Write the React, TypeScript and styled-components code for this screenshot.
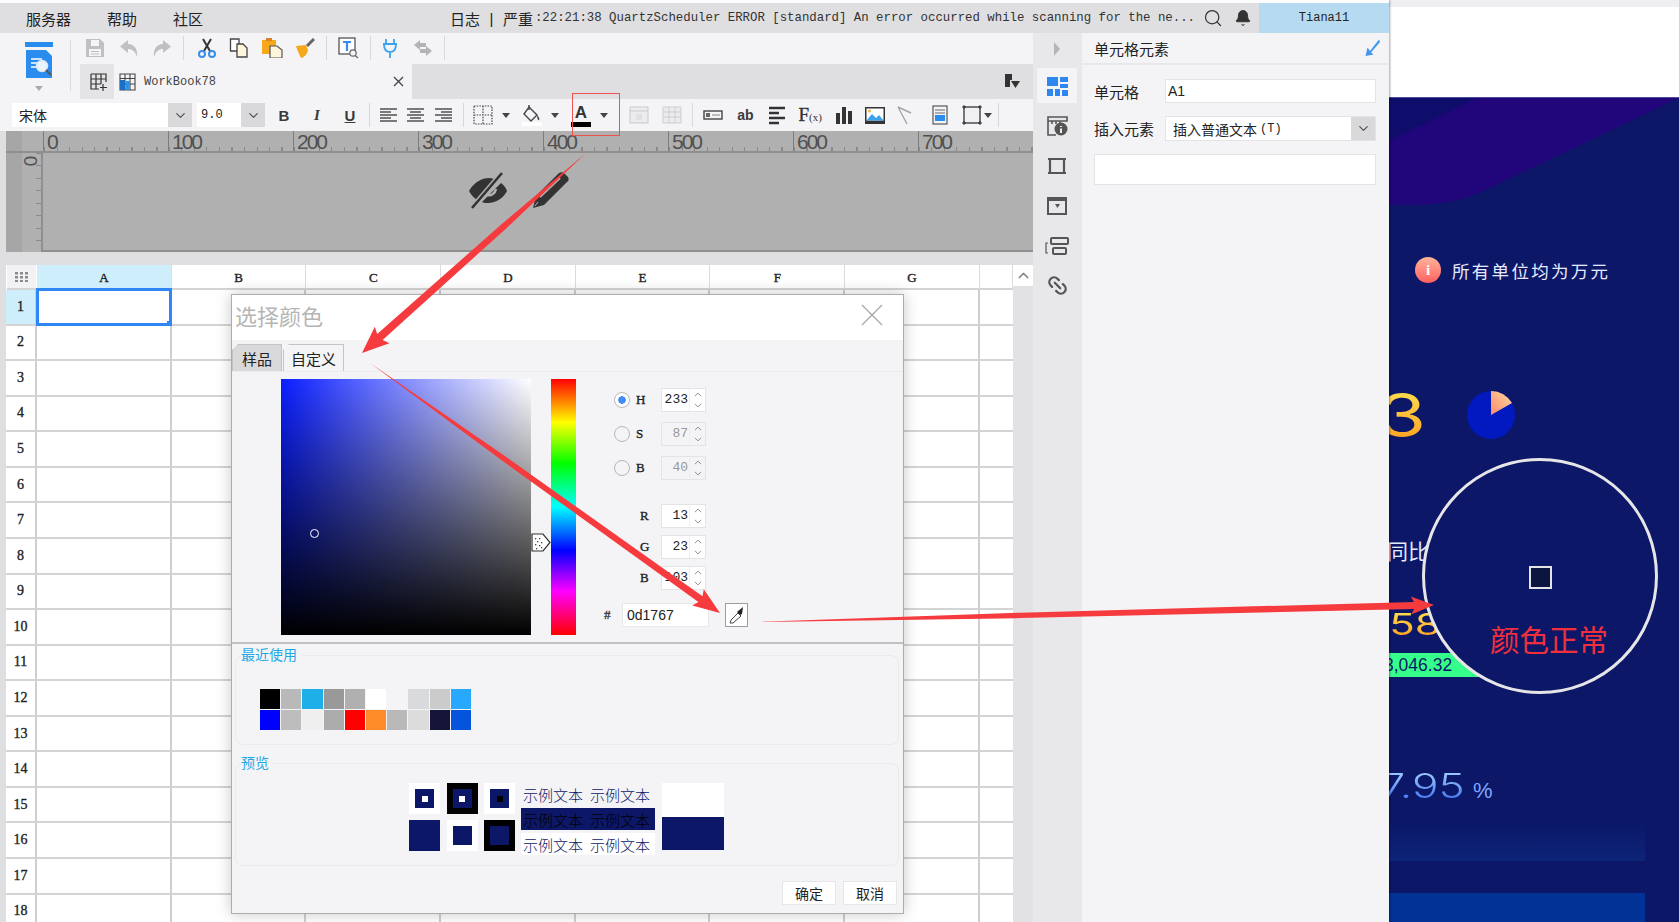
import React from "react";
import styled, { createGlobalStyle } from "styled-components";
import { Search, Bell, ChevronDown, ChevronUp, Link2 } from "lucide-react";

const CJK = `"Liberation Sans", "Noto Sans CJK SC", sans-serif`;
const MONO = `"Liberation Mono", "Noto Sans CJK SC", monospace`;
const SERIF = `"Liberation Serif", "Noto Sans CJK SC", serif`;

const Global = createGlobalStyle`
  html, body { margin: 0; padding: 0; background: #fff; }
  * { box-sizing: border-box; }
  body { font-family: ${CJK}; }
`;

const Page = styled.div`
  position: relative; display: flex; width: 1679px; height: 922px; overflow: hidden; background: #fff;
`;
const AppWindow = styled.div`
  display: flex; flex-direction: column; width: 1389px; height: 922px; padding-top: 3px;
  background: #fdfdfd; box-shadow: 1px 0 2px rgba(0,0,0,.35); z-index: 1; flex: none;
`;
const TopBar = styled.div`
  display: flex; align-items: center; height: 30px; background: #dfdfe1; color: #222; flex: none;
`;
const Menu = styled.div`
  display: flex; gap: 36px; width: 450px; padding-left: 26px; font-size: 15px;
`;
const LogLine = styled.div`
  display: flex; align-items: center; width: 746px; font-size: 15px; white-space: nowrap;
`;
const LogBar = styled.span`margin: 0 9.5px;`;
const LogMono = styled.span`
  font-family: ${MONO}; font-size: 12.36px; color: #333; margin-left: 2px;
`;
const TopIcon = styled.div`
  display: flex; width: 30px; justify-content: center; margin-left: ${p => p.$ml ?? 0}px; color: #333;
`;
const UserCell = styled.div`
  margin-left: auto; width: 130px; height: 100%; display: flex; align-items: center; justify-content: center;
  background: #b6dbf0; font-family: ${MONO}; font-size: 12px; color: #222;
`;
const AppBody = styled.div`display: flex; flex: 1; min-height: 0;`;
const Workspace = styled.div`
  display: flex; flex-direction: column; width: 1033px; background: #dfdfe1; flex: none;
`;
const HeadBlock = styled.div`
  display: grid; grid-template-columns: 80px 1fr; grid-template-rows: 31px 35px; background: #f4f4f7;
`;
const LogoCell = styled.div`
  grid-row: 1 / 3; display: flex; flex-direction: column; align-items: center; padding: 9px 0 0 0; width: 65px;
  margin-left: 6px; position: relative; gap: 7px;
`;
const LogoRule = styled.div`
  position: absolute; right: 0; top: 7px; bottom: 8px; width: 1px; background: #dcdcde;
`;
const Caret = styled.i`
  display: block; width: 0; height: 0; border-left: 4px solid transparent; border-right: 4px solid transparent;
  border-top: 5px solid ${p => p.$c ?? "#444"}; flex: none;
`;
const ToolRow = styled.div`display: flex; align-items: center; padding: 0 0 2px 5px;`;
const ToolGroup = styled.div`display: flex; align-items: center; gap: ${p => p.$gap ?? 13.5}px;`;
const Sep = styled.div`
  width: 1px; height: ${p => p.$h ?? 24}px; background: #d8d8da; flex: none;
  margin-left: ${p => p.$l ?? 11}px; margin-right: ${p => p.$r ?? 11}px;
`;
const TabRow = styled.div`display: flex; background: #dfdfe1; align-items: stretch; position: relative;`;
const AddTab = styled.div`
  width: 34px; display: flex; align-items: center; justify-content: center; background: #e4e4e6; padding-left: 3px;
`;
const ActiveTab = styled.div`
  width: 298px; display: flex; align-items: center; gap: 8px; padding: 0 8px 0 5px; background: #f4f4f7;
  font-family: ${MONO}; font-size: 12px; color: #444;
`;
const TabClose = styled.span`margin-left: auto; display: flex;`;
const TabEnd = styled.div`margin-left: auto; display: flex; align-items: center; padding-right: 13px;`;
const FormatRow = styled.div`
  display: flex; align-items: center; height: 32px; background: #f4f4f7; padding-left: 12px; flex: none;
`;
const FontBox = styled.div`
  display: flex; align-items: stretch; height: 24px; width: ${p => p.$w}px; margin-left: ${p => p.$ml ?? 0}px;
  background: #fff; font-size: 14px; color: #222; flex: none;
`;
const FontValue = styled.div`
  flex: 1; display: flex; align-items: center; padding-left: ${p => p.$pad ?? 7}px;
  font-family: ${p => (p.$mono ? MONO : CJK)}; font-size: ${p => (p.$mono ? 12 : 14)}px;
`;
const DropButton = styled.div`
  width: ${p => p.$w ?? 24}px; background: #d9d9dc; display: flex; align-items: center; justify-content: center; color: #555;
`;
const FmtGroup = styled.div`
  display: flex; align-items: center; gap: ${p => p.$gap ?? 8}px; margin-left: ${p => p.$ml ?? 0}px;
`;
const FmtCell = styled.div`
  width: 24px; height: 24px; display: flex; align-items: center; justify-content: center; flex: none;
`;
const FmtLetter = styled.span`
  font-size: ${p => p.$s ?? 15}px; font-weight: 700; color: #3a3a3a;
  font-style: ${p => (p.$i ? "italic" : "normal")}; text-decoration: ${p => (p.$u ? "underline" : "none")};
  font-family: ${p => (p.$i ? '"Liberation Serif", serif' : '"Liberation Sans", sans-serif')};
`;
const FxText = styled.span`
  font-family: "Liberation Serif", serif; font-weight: 400; font-size: 19px; color: #333; -webkit-text-stroke: .4px #333;
  small { font-size: 11px; -webkit-text-stroke: 0; }
`;
const WithCaret = styled.div`display: flex; align-items: center; gap: ${p => p.$gap ?? 7}px;`;
const ColorA = styled.div`
  width: 24px; display: flex; flex-direction: column; align-items: center; line-height: 1;
  font: 700 17px "Liberation Sans", sans-serif; color: #333;
  &::after { content: ""; width: 20px; height: 5px; background: #000; margin-top: -1px; }
`;

const RulerArea = styled.div`
  display: flex; flex-direction: column; height: 121px; margin-left: 6px; background: #b0b0b0; flex: none;
`;
const RulerRow = styled.div`display: flex; height: 22px; border-bottom: 2px solid #8f8f8f; flex: none;`;
const RulerCorner = styled.div`width: 37px; flex: none; background: linear-gradient(90deg,#a6a6a6 0 16px,#b0b0b0 16px);`;
const RulerMark = styled.div`
  width: 125px; flex: none; padding-left: 3px; border-left: 1px solid #7d7d7d; font-size: 21px; line-height: 21px;
  letter-spacing: -2px; color: #505050; font-family: "Liberation Sans", sans-serif;
  background: repeating-linear-gradient(90deg, #8a8a8a 0 1px, transparent 1px 12.5px) bottom / 100% 4px no-repeat;
`;
const CanvasRow = styled.div`display: flex; flex: 1; min-height: 0;`;
const VRuler = styled.div`
  width: 37px; flex: none; border-right: 2px solid #8f8f8f; padding-left: 17px;
  background:
    repeating-linear-gradient(180deg, #8a8a8a 0 1px, transparent 1px 12.5px) right / 5px 100% no-repeat,
    linear-gradient(90deg,#a6a6a6 0 16px,#b0b0b0 16px);
`;
const VZero = styled.div`
  width: 14px; height: 14px; transform: rotate(90deg); font-size: 19px; color: #505050; text-align: center; line-height: 14px;
  margin-top: 1px; font-family: "Liberation Sans", sans-serif;
`;
const CanvasMain = styled.div`
  flex: 1; display: flex; gap: 23px; padding: 18px 0 0 424px; border-bottom: 2px solid #8f8f8f;
`;
const GapBand = styled.div`height: 13px; flex: none;`;

const SheetWrap = styled.div`display: flex; flex: 1; min-height: 0; margin-left: 6px; overflow: hidden;`;
const SheetGrid = styled.div`
  display: grid; grid-template-columns: 31px repeat(7, 134.7px) 33px; grid-auto-rows: 35.57px;
  grid-template-rows: 25px; background: #fff; width: 1007px; align-content: start;
`;
const Corner = styled.div`
  display: flex; align-items: center; justify-content: center; background: #f2f2f4; margin: 0 1px 0 1px;
  border-bottom: 2px solid #d4d4d4;
`;
const ColHead = styled.div`
  display: flex; align-items: center; justify-content: center; font-family: ${SERIF}; font-size: 13px; -webkit-text-stroke: .35px #222;
  color: #222; padding-top: 2px; background: ${p => (p.$on ? "#cdeefa" : "#fff")}; border-right: 1px solid #dcdcdc; border-bottom: 2px solid #d4d4d4;
`;
const RowHead = styled.div`
  display: flex; align-items: center; justify-content: center; font-family: ${SERIF}; font-size: 14px; -webkit-text-stroke: .35px #222;
  color: #222; background: ${p => (p.$on ? "#cdeefa" : "#fff")}; border-right: 2px solid #cfcfcf; border-bottom: 2px solid #d4d4d4;
`;
const Cell = styled.div`
  position: relative; background: #fff; border-right: ${p => (p.$last ? "0" : "2px solid #cfcfcf")}; border-bottom: 2px solid #d4d4d4;
`;
const Selection = styled.div`
  position: absolute; left: -1px; top: -2px; right: -2px; bottom: -2px; border: 3px solid #2f86f4;
  &::after { content: ""; position: absolute; right: -5px; bottom: -5px; width: 7px; height: 7px; background: #2f86f4; }
`;
const ScrollTrack = styled.div`display: flex; flex-direction: column; width: 20px; flex: none; background: #e2e2e4;`;
const ScrollUp = styled.div`
  height: 21px; background: #fff; display: flex; align-items: center; justify-content: center; color: #888;
`;

const Rail = styled.div`
  width: 49px; flex: none; background: #e8e8ea; padding: 0 5px 0 4px; display: flex; flex-direction: column; gap: 5px;
`;
const RailToggle = styled.div`height: 31px; display: flex; align-items: center; justify-content: center; margin-bottom: -1px;`;
const RailItem = styled.div`
  height: 35px; display: flex; align-items: center; justify-content: center; background: ${p => (p.$on ? "#f4f4f7" : "transparent")};
`;
const SidePanel = styled.div`flex: 1; background: #f4f4f7; display: flex; flex-direction: column; color: #222;`;
const SideHead = styled.div`
  height: 32px; display: flex; align-items: center; justify-content: space-between; padding: 0 9px 0 12px;
  border-bottom: 2px solid #e8e8ea; font-size: 15px; flex: none;
`;
const SideForm = styled.div`display: flex; flex-direction: column; gap: 13px; padding: 14px 13px 0 12px;`;
const FormRow = styled.div`display: flex; align-items: center; font-size: 15px;`;
const FormLabel = styled.div`width: 71px; flex: none;`;
const TextField = styled.div`
  flex: 1; display: flex; align-items: center; height: ${p => p.$h ?? 24}px; background: #fff; border: 1px solid #e4e4e6; padding-left: 2px; font-size: 14px;
`;
const SelectField = styled.div`
  flex: 1; display: flex; height: 25px; background: #fff; border: 1px solid #e4e4e6;
`;
const SelectValue = styled.div`flex: 1; display: flex; align-items: center; padding-left: 7px; font-size: 14px;`;
const SelectTail = styled.small`font-family: ${MONO}; font-size: 12px; margin-left: 3px;`;

/* colour dialog */
const Dialog = styled.div`
  position: absolute; left: 231px; top: 294px; width: 673px; height: 620px; background: #f4f4f7; z-index: 3;
  border: 1.5px solid #acacac; box-shadow: 0 0 14px rgba(0,0,0,.22); display: flex; flex-direction: column;
`;
const DialogHead = styled.div`
  height: 45px; flex: none; display: flex; align-items: center; justify-content: space-between; background: #fff;
  padding: 0 20px 5px 3px; font-size: 22px; color: #b5b5b5;
`;
const TabStrip = styled.div`
  height: 32px; flex: none; display: flex; align-items: flex-end; gap: 1px; padding-left: 0; border-bottom: 1px solid #ececef;
`;
const PickerTab = styled.div`
  height: 27px; width: ${p => p.$w}px; display: flex; align-items: center; justify-content: center; font-size: 15px; color: #222;
  background: ${p => (p.$on ? "#f4f4f7" : "#d9d9dc")}; border: 1px solid #c4c4c6; border-bottom: 0;
  clip-path: polygon(6px 0, 100% 0, 100% 100%, 0 100%, 0 6px);
`;
const CustomPane = styled.div`
  height: 272px; flex: none; display: flex; padding-left: 49px; border-bottom: 2px solid #c0c0c2;
`;
const ColorField = styled.div`
  position: relative; width: 250px; height: 256px; margin-top: 7px; flex: none;
  background: linear-gradient(to top, #000, rgba(0,0,0,0)), linear-gradient(to right, #0a1eff, #fff);
`;
const FieldDot = styled.div`
  position: absolute; left: 29px; top: 150px; width: 9px; height: 9px; border-radius: 50%; border: 1px solid #fff;
`;
const ThumbGutter = styled.div`width: 20px; flex: none; padding-top: 161px;`;
const HueBar = styled.div`
  width: 25px; height: 256px; margin-top: 7px; flex: none;
  background: linear-gradient(to bottom,#f00 0%,#ff0 17%,#0f0 33%,#0ff 50%,#00f 67%,#f0f 83%,#f00 100%);
`;
const HsbColumn = styled.div`
  display: flex; flex-direction: column; padding-top: 16px; margin-left: 38px; width: 150px;
`;
const SpinRow = styled.div`
  display: flex; align-items: center; height: 24px; margin-top: ${p => p.$mt ?? 0}px;
`;
const Radio = styled.div`
  width: 16px; height: 16px; border-radius: 50%; border: 1px solid #b8b8ba; background: ${p => (p.$on ? "radial-gradient(circle,#3f8ef5 0 3.5px,#fff 4px)" : "#f4f4f7")}; flex: none;
`;
const SpinLabel = styled.div`
  width: ${p => p.$w}px; padding-left: ${p => p.$pad ?? 0}px; flex: none;
  font-family: ${SERIF}; font-size: 13px; -webkit-text-stroke: .35px #222; color: #222;
`;
const SpinBox = styled.div`
  width: 45px; height: 24px; display: flex; background: ${p => (p.$off ? "#f4f4f7" : "#fff")}; border: 1px solid #e4e4e6; flex: none;
`;
const SpinValue = styled.div`
  flex: 1; text-align: right; font-family: ${MONO}; font-size: 13px; line-height: 22px; padding-right: 1px;
  color: ${p => (p.$off ? "#999" : "#222")};
`;
const SpinArrows = styled.div`
  width: 16px; display: flex; flex-direction: column; align-items: center; justify-content: center; color: #666; border-left: 1px solid #eee; flex: none;
`;
const HexRow = styled.div`display: flex; align-items: center; height: 24px; margin-top: 13px; margin-left: -10px;`;
const HexMark = styled.div`
  width: 18px; font-family: ${SERIF}; font-size: 13px; -webkit-text-stroke: .35px #333; color: #333; flex: none;
`;
const HexInput = styled.div`
  width: 87px; height: 24px; background: #fff; border: 1px solid #e8e8ea; padding-left: 4px; font-size: 14px; line-height: 22px; color: #222; flex: none;
`;
const PickButton = styled.div`
  width: 23px; height: 24px; margin-left: 16px; background: #fff; border: 1px solid #9c9c9c; display: flex; align-items: center; justify-content: center; flex: none;
`;
const FieldGroup = styled.div`
  position: relative; height: ${p => p.$h}px; margin: ${p => p.$mt}px 4px 0 3px; flex: none;
  border: 1px solid #ebebee; border-radius: 8px; padding: ${p => p.$pt}px 0 0 ${p => p.$pl}px;
`;
const GroupLegend = styled.div`
  position: absolute; left: 5px; top: -10px; padding-right: 5px; background: #f4f4f7; font-size: 14px; line-height: 18px; color: #1ea8e6;
`;
const SwatchGrid = styled.div`
  display: grid; grid-template-columns: repeat(10, 20.2px); grid-auto-rows: 20px; gap: 1px;
`;
const Swatch = styled.div`background: ${p => p.$c};`;
const PreviewRow = styled.div`display: flex;`;
const BoxGrid = styled.div`
  display: grid; grid-template-columns: 31px 31px 31px; grid-auto-rows: 31px; column-gap: 6.5px; row-gap: 6px; flex: none;
`;
const Nest = styled.div`
  display: flex; align-items: center; justify-content: center; background: ${p => p.$c};
`;
const NestMid = styled(Nest)`width: 19px; height: 19px;`;
const NestCore = styled(Nest)`width: 6px; height: 6px;`;
const SampleStack = styled.div`
  width: 134px; margin-left: 6px; display: flex; flex-direction: column; gap: 3px; flex: none;
`;
const SampleLine = styled.div`
  height: 22px; display: flex; gap: 7px; padding-left: 2px; align-items: center; font-size: 15px; font-weight: 300;
  background: ${p => p.$bg}; color: ${p => p.$fg}; white-space: nowrap;
`;
const CompareCol = styled.div`width: 62px; height: 67px; margin-left: 7px; display: flex; flex-direction: column; flex: none;`;
const CompareHalf = styled.div`flex: 1; background: ${p => p.$c};`;
const DialogFoot = styled.div`display: flex; justify-content: flex-end; gap: 7px; padding: 15px 6px 0 0;`;
const FootButton = styled.div`
  width: 54px; height: 24px; background: #fff; border: 1px solid #e6e6e8; display: flex; align-items: center; justify-content: center; font-size: 14px; color: #222;
`;

/* dashboard behind */
const Dashboard = styled.div`position: relative; flex: 1; display: flex; flex-direction: column; background: #fff;`;
const GreyStrip = styled.div`height: 7px; background: #efeff1; flex: none;`;
const WhiteStrip = styled.div`height: 90px; background: #fff; flex: none;`;
const DarkPanel = styled.div`
  flex: 1; display: flex; flex-direction: column; background: #0c1767; color: #fff; border-top: 1px solid #4c4796; overflow: hidden;
`;
const WaveArt = styled.svg`display: block; flex: none;`;
const Notice = styled.div`
  display: flex; align-items: center; gap: 11px; height: 28px; margin-top: 48px; padding-left: 26px; flex: none;
  font-size: 17.5px; letter-spacing: 2.3px; color: #e6eaff;
`;
const InfoDot = styled.div`
  width: 26px; height: 26px; border-radius: 50%; background: linear-gradient(#ffb59a,#ff6060); display: flex; align-items: center; justify-content: center;
  font: 700 15px "Liberation Serif", serif; color: #fff; flex: none; letter-spacing: 0;
`;
const KpiRow = styled.div`display: flex; align-items: center; height: 50px; margin-top: 106px; flex: none;`;
const GoldClip = styled.div`
  width: ${p => p.$w}px; overflow: hidden; flex: none; text-align: right;
`;
const GoldText = styled.span`
  display: inline-block; font: 400 ${p => p.$s}px/1.05 Inter, sans-serif; transform: scaleX(${p => p.$x}); transform-origin: right center;
  background: linear-gradient(#ffe552,#ff9b1c); -webkit-background-clip: text; background-clip: text; color: transparent;
`;
const Pie = styled.svg`margin-left: 43px; flex: none;`;
const YoY = styled.div`
  width: 40px; overflow: hidden; direction: rtl; margin-top: 99px; font-size: 21px; line-height: 26px; color: #e6eaff; white-space: nowrap; flex: none;
`;
const GoldRow = styled.div`margin-top: 44px; flex: none;`;
const GreenPill = styled.div`
  width: 100px; height: 24px; margin-top: 12px; background: #35ff8a; color: #0c1767;
  font-size: 17.5px; line-height: 24px; white-space: nowrap; overflow: hidden; flex: none; text-indent: -5px;
`;
const PercentRow = styled.div`display: flex; align-items: baseline; margin-top: 92px; height: 34px; flex: none;`;
const PercentClip = styled.div`width: 76px; overflow: hidden; text-align: right; flex: none;`;
const PercentValue = styled.span`
  display: inline-block; font: 300 34px/34px Inter, sans-serif; transform: scaleX(1.3); transform-origin: right center;
  background: linear-gradient(#a5d4ff,#3d6ef0); -webkit-background-clip: text; background-clip: text; color: transparent;
`;
const PercentSign = styled.div`
  margin-left: 8px; font: 400 22px "Liberation Sans", sans-serif; color: #7fa6ff;
`;
const BandSoft = styled.div`
  width: 256px; height: 40px; margin-top: 18px; background: linear-gradient(rgba(12,36,120,0),#0c2478); flex: none;
`;
const BandSolid = styled.div`width: 256px; height: 30px; margin-top: 32px; background: #033296; flex: none;`;
const Lens = styled.div`
  position: absolute; left: 33px; top: 458px; width: 236px; height: 236px; border-radius: 50%; border: 3px solid #e6e6e8;
  background: #0c1767; display: flex; flex-direction: column; align-items: center; padding-top: 105px; z-index: 2;
`;
const LensProbe = styled.div`width: 23px; height: 23px; border: 2px solid #e4e4e6; background: #0c1440; flex: none;`;
const LensText = styled.div`margin: 34px 0 0 18px; font-size: 29.5px; line-height: 36px; color: #f0303c; white-space: nowrap;`;

/* call-out overlays */
const MarkBox = styled.div`
  position: absolute; left: 572px; top: 93px; width: 48px; height: 43px; border: 1.5px solid #ef5350; z-index: 2;
`;
const ArrowLayer = styled.svg`position: absolute; left: 0; top: 0; z-index: 4; pointer-events: none;`;

/* drawings */
type P = { s?: number };
const Svg = ({ w = 20, h = 20, children }: { w?: number; h?: number; children: React.ReactNode }) => (
  <svg width={w} height={h} viewBox={`0 0 ${w} ${h}`} style={{ flex: "none" }}>{children}</svg>
);
const IconLogo = () => (
  <Svg w={28} h={37}>
    <rect x="0" y="0" width="28" height="5" fill="#2b8cf0" />
    <path d="M1 8H21L27 14V36H1Z" fill="#2b8cf0" />
    <path d="M6 17H17M6 21H12M6 25H11" stroke="#fff" strokeWidth="1.5" />
    <circle cx="17" cy="24" r="5.5" fill="#eaf4ff" stroke="#dfe8ef" strokeWidth="1.5" />
    <path d="M21 28L26 33" stroke="#555" strokeWidth="1.8" />
  </Svg>
);
const IconSave = () => (
  <Svg><path d="M1 1H15L19 5V19H1Z" fill="#bfc0c2" /><rect x="6" y="2" width="8" height="6" fill="#f4f4f7" /><rect x="4" y="11" width="12" height="7" fill="#f4f4f7" /><path d="M6 13.5H14M6 16H14" stroke="#bfc0c2" /></Svg>
);
const IconUndo = () => <Svg><path d="M9 2L1 8.5L9 15V11C13 11 16 13 18 19C19 11 15 6 9 6Z" fill="#bfc0c2" /></Svg>;
const IconRedo = () => <Svg><path d="M11 2L19 8.5L11 15V11C7 11 4 13 2 19C1 11 5 6 11 6Z" fill="#bfc0c2" /></Svg>;
const IconCut = () => (
  <Svg><path d="M6 1L13 13M14 1L7 13" stroke="#333" strokeWidth="2" fill="none" /><circle cx="5" cy="16" r="3" stroke="#3a8ee8" strokeWidth="2" fill="none" /><circle cx="15" cy="16" r="3" stroke="#3a8ee8" strokeWidth="2" fill="none" /></Svg>
);
const IconCopy = () => (
  <Svg><path d="M1.5 1H10V13H1.5Z" fill="#fff" stroke="#444" strokeWidth="1.3" /><path d="M8 6H14L18 10V19H8Z" fill="#fff4dc" stroke="#444" strokeWidth="1.3" /></Svg>
);
const IconPaste = () => (
  <Svg w={22}><rect x="1" y="2" width="14" height="14" fill="#f5a81c" /><rect x="5" y="0" width="6" height="3" fill="#d9822b" /><path d="M9 8H16L21 12V20H9Z" fill="#fff4dc" stroke="#555" strokeWidth="1.2" /></Svg>
);
const IconBrush = () => (
  <Svg><path d="M1 8L11 7L13 12C12 16 10 19 6 20C4 16 2 12 1 8Z" fill="#f5a81c" /><path d="M12 8L19 1" stroke="#666" strokeWidth="3" /></Svg>
);
const IconFind = () => (
  <Svg w={21} h={22}><rect x="1" y="1" width="16" height="16" fill="#fff" stroke="#555" strokeWidth="1.3" /><path d="M5 5H13M9 5V14" stroke="#3a8ee8" strokeWidth="2.2" /><circle cx="15" cy="16" r="3.2" fill="#f4f4f7" stroke="#666" strokeWidth="1.2" /><path d="M17 18.5L20 21" stroke="#666" strokeWidth="1.3" /></Svg>
);
const IconPlug = () => (
  <Svg w={18}><path d="M5 1V6M13 1V6M2 6H16M3 6C3 12 6 14 9 14C12 14 15 12 15 6M9 14V20" stroke="#3da2ee" strokeWidth="1.8" fill="none" /></Svg>
);
const IconSwap = () => (
  <Svg><path d="M1 7L7 2V5H13V9H7V12Z" fill="#b3b4b6" /><path d="M19 13L13 8V11H7V15H13V18Z" fill="#b3b4b6" /></Svg>
);
const IconAddGrid = () => (
  <Svg w={18} h={18}><path d="M1 1H16V9M1 1V16H9M1 6H16M6 1V16M11 1V11M1 11H11" stroke="#333" strokeWidth="1.2" fill="none" /><path d="M13 11V18M10 14.5H17" stroke="#333" strokeWidth="1.2" /></Svg>
);
const IconBook = () => (
  <Svg w={17} h={18}><path d="M1 1H16V17H1ZM1 5.5H16M6 1V17M11 1V17M1 11H16" stroke="#444" strokeWidth="1.1" fill="none" /><path d="M1 7H6V17H1Z" fill="#1e6fc4" /><path d="M7 8H10.5V17H7Z" fill="#2c93e8" /></Svg>
);
const IconClose = ({ s = 11 }: P) => (
  <svg width={s} height={s} viewBox="0 0 11 11"><path d="M1 1L10 10M10 1L1 10" stroke="#444" strokeWidth="1.3" /></svg>
);
const IconPaneMenu = () => (
  <Svg w={15} h={15}><path d="M0 0H7V6H5V13H0Z" fill="#333" /><path d="M6 7H15L10.5 14Z" fill="#333" /></Svg>
);
const IconAlign = ({ a }: { a: "l" | "c" | "r" }) => {
  const long = [3, 9, 15], short = [6, 12];
  const x = a === "l" ? 1 : a === "c" ? 4 : 7;
  return (
    <Svg w={19} h={18}>
      {long.map(y => <path key={y} d={`M1 ${y}H18`} stroke="#444" strokeWidth="1.4" />)}
      {short.map(y => <path key={y} d={`M${x} ${y}H${x + 11}`} stroke="#444" strokeWidth="1.4" />)}
    </Svg>
  );
};
const IconBorder = () => (
  <Svg w={20} h={20}><path d="M1 1H19V19H1ZM10 1V19M1 10H19" stroke="#444" strokeWidth="1.2" strokeDasharray="1.5 1.2" fill="none" /></Svg>
);
const IconFill = () => (
  <Svg w={20} h={22}><path d="M7 3L15 11L9 17L2 10Z" fill="#f4f4f7" stroke="#444" strokeWidth="1.4" /><path d="M7 1V6" stroke="#444" strokeWidth="1.4" /><path d="M15 11C17 13 18 15 17 16C16 17 15 14 15 11Z" fill="#444" /><rect x="0" y="18" width="20" height="4" fill="#fff" /></Svg>
);
const IconFrameA = () => <Svg><rect x="1" y="2" width="18" height="16" fill="#ececee" stroke="#c9c9cb" /><path d="M1 6H19" stroke="#c9c9cb" /><rect x="7" y="9" width="6" height="6" fill="#e0e0e2" /></Svg>;
const IconTable = () => <Svg><path d="M1 2H19V18H1ZM1 7H19M1 12H19M7 2V18M13 2V18" stroke="#cdcdcf" fill="#ececee" /></Svg>;
const IconField = () => <Svg h={12}><rect x="1" y="2" width="18" height="8" fill="none" stroke="#444" strokeWidth="1.4" /><rect x="3" y="4" width="4" height="4" fill="#666" /><path d="M9 6H17" stroke="#bbb" strokeWidth="2" /></Svg>;
const IconLines = () => <Svg><path d="M1 3H17M1 8H11M1 13H17M1 18H11" stroke="#333" strokeWidth="2.6" /></Svg>;
const IconBars = () => <Svg><path d="M3 8H7V19H3ZM9 2H13V19H9ZM15 6H19V19H15Z" fill="#333" /></Svg>;
const IconPicture = () => <Svg w={20} h={18}><rect x="0" y="1" width="20" height="17" fill="#333" /><rect x="1.5" y="2.5" width="17" height="12" fill="#fff" /><path d="M1.5 14.5L7 8L11 12L14 9L18.5 14.5Z" fill="#3aa3ee" /><circle cx="4.5" cy="5" r="1.5" fill="#f2b33b" /></Svg>;
const IconSlash = () => <Svg><path d="M1 2L14 8M1 2L10 19" stroke="#a5a5a7" strokeWidth="1.4" fill="none" /></Svg>;
const IconPanel = () => <Svg w={16} h={20}><rect x="1" y="1" width="14" height="18" fill="#f4f4f7" stroke="#555" strokeWidth="1.2" /><path d="M3 5H13M3 8H13" stroke="#666" /><path d="M3 10H13V16H3Z" fill="#2b8cf0" /></Svg>;
const IconFrame = () => <Svg><rect x="2" y="2" width="16" height="16" fill="#f0f0f2" stroke="#333" strokeWidth="1.3" /><path d="M0 2H4M2 0V4M16 2H20M18 0V4M0 18H4M2 16V20M16 18H20M18 16V20" stroke="#333" /></Svg>;
const IconEye = () => (
  <Svg w={42} h={38}>
    <path d="M2 20C7 11 15 7 22 7C25 7 28 8 30 9L10 29C7 27 4 24 2 20Z" fill="#333" />
    <path d="M34 12C37 14 39 17 40 20C36 28 28 32 21 32C19 32 17 32 15 31Z" fill="#333" />
    <path d="M20 24C24 25 28 23 29 18" stroke="#b0b0b0" strokeWidth="2.5" fill="none" />
    <path d="M5 37L35 2" stroke="#b0b0b0" strokeWidth="5.5" />
    <path d="M5 37L35 2" stroke="#333" strokeWidth="2.6" />
  </Svg>
);
const IconPencil = () => (
  <Svg w={38} h={38}>
    <path d="M27 2C29 1 31 1 33 3L36 6C37 8 37 10 35 11L12 34L1 37L4 25Z" fill="#333" />
    <path d="M8 26L28 7" stroke="#b0b0b0" strokeWidth="2" />
    <path d="M6 31L3 35" stroke="#b0b0b0" strokeWidth="1" />
  </Svg>
);
const IconDrag = () => (
  <Svg w={14} h={10}>
    {[0, 5, 10].map(x => [0, 4, 8].map(y => <rect key={`${x}-${y}`} x={x} y={y} width="3" height="2.5" fill="#8a8a8a" />))}
  </Svg>
);
const IconRailToggle = () => <Svg w={8} h={14}><path d="M1 0L7 7L1 14Z" fill="#b5b5b7" /></Svg>;
const IconCheckArrow = () => <Svg w={15} h={18}><path d="M14 0.5L5 12L2.5 8.5L0.5 17L8.5 15.5L6 13.5L15 3Z" fill="#3f97ee" /></Svg>;
const IconRailCells = () => <Svg w={21} h={21}><path d="M0 2H11V11H0ZM13 2H21V7H13ZM13 9H21V13H13ZM0 14H6V21H0ZM8 14H13V21H8ZM15 15H21V21H15Z" fill="#2f86f0" /></Svg>;
const IconRailInfo = () => (
  <Svg w={21} h={22}><path d="M1 2H20V6H1ZM1 6V20H9M5 6V9M9 6V9M13 6V9" stroke="#555" strokeWidth="1.6" fill="none" /><circle cx="14" cy="14" r="6.5" fill="#555" /><path d="M14 11V12M14 13.5V18" stroke="#fff" strokeWidth="1.8" /></Svg>
);
const IconRailFrame = () => <Svg><path d="M3 3H17V17H3Z" fill="none" stroke="#555" strokeWidth="2.2" /><path d="M1 3H5M15 3H19M1 17H5M15 17H19" stroke="#555" strokeWidth="2" /></Svg>;
const IconRailBox = () => <Svg h={18}><rect x="1" y="1" width="18" height="16" fill="none" stroke="#555" strokeWidth="2" /><path d="M1 3H19" stroke="#555" strokeWidth="2" /><path d="M8 7H13L10.5 11Z" fill="#555" /></Svg>;
const IconRailStack = () => <Svg w={24} h={20}><rect x="6" y="2" width="17" height="6" rx="1" fill="none" stroke="#555" strokeWidth="2" /><rect x="8" y="12" width="13" height="6" rx="1" fill="none" stroke="#555" strokeWidth="2" /><path d="M3 7H1V17H3" stroke="#555" fill="none" strokeWidth="1.2" /></Svg>;
const IconPicker = () => (
  <Svg w={15} h={18}><path d="M9 7L12 10L4 17L1 17L2 14Z" fill="#fff" stroke="#444" /><path d="M8 6L14 1L13 8L11 9Z" fill="#222" /></Svg>
);
const HueThumb = () => (
  <Svg w={20} h={19}>
    <path d="M1 1H12L19 9.5L12 18H1Z" fill="#fff" stroke="#333" strokeWidth="1.2" />
    {[[4, 5], [8, 5], [6, 8], [10, 9], [4, 11], [8, 12], [5, 15], [10, 14]].map(([x, y]) => <rect key={`${x}${y}`} x={x} y={y} width="1.3" height="1.3" fill="#444" />)}
  </Svg>
);

const arrow = (x1: number, y1: number, x2: number, y2: number, neck: number, headLen: number, headHalf: number) => {
  const len = Math.hypot(x2 - x1, y2 - y1);
  const ux = (x2 - x1) / len, uy = (y2 - y1) / len;
  const nx = -uy, ny = ux;
  const bx = x2 - ux * headLen, by = y2 - uy * headLen;
  const mx = x1 + (bx - x1) * 0.4, my = y1 + (by - y1) * 0.4;
  const side = (s: number) => [mx + (s * nx * neck * 0.38), my + (s * ny * neck * 0.38)];
  const pts = [
    [x1, y1],
    side(1),
    [bx + (nx * neck) / 2, by + (ny * neck) / 2],
    [bx - ux * 3 + nx * headHalf, by - uy * 3 + ny * headHalf],
    [x2, y2],
    [bx - ux * 3 - nx * headHalf, by - uy * 3 - ny * headHalf],
    [bx - (nx * neck) / 2, by - (ny * neck) / 2],
    side(-1),
  ];
  return pts.map(p => p.map(v => v.toFixed(1)).join(",")).join(" ");
};

const Spin = ({ label, value, radio, on, off }: { label: string; value: string; radio?: boolean; on?: boolean; off?: boolean }) => (
  <>
    {radio ? <Radio $on={on} /> : null}
    <SpinLabel $w={radio ? 31 : 47} $pad={radio ? 6 : 26}>{label}</SpinLabel>
    <SpinBox $off={off}>
      <SpinValue $off={off}>{value}</SpinValue>
      <SpinArrows><ChevronUp size={12} strokeWidth={1.6} /><ChevronDown size={12} strokeWidth={1.6} /></SpinArrows>
    </SpinBox>
  </>
);

const COLS = ["A", "B", "C", "D", "E", "F", "G", ""];
const ROWS = Array.from({ length: 18 }, (_, i) => i + 1);
const RECENT = ["#000", "#b9b9b9", "#1fafe8", "#999", "#b0b0b0", "#fff", "#f4f4f7", "#d9dadd", "#cbcbcb", "#28a8ff",
  "#00f", "#bdbdbd", "#efefef", "#acacac", "#f00", "#ff8c28", "#b9b9b9", "#dcdcdc", "#141538", "#0455db"];
const NAVY = "#0d1767";
const NESTS = [
  ["#fff", NAVY, "#fff"], ["#000", NAVY, "#fff"], ["#fff", NAVY, "#000"],
  [NAVY, NAVY, NAVY], ["#fff", NAVY, NAVY], ["#000", NAVY, NAVY],
];

export default function App() {
  return (
    <Page>
      <Global />
      <AppWindow>
        <TopBar>
          <Menu><span>服务器</span><span>帮助</span><span>社区</span></Menu>
          <LogLine>
            日志<LogBar>|</LogBar>严重
            <LogMono>:22:21:38 QuartzScheduler ERROR [standard] An error occurred while scanning for the ne...</LogMono>
          </LogLine>
          <TopIcon $ml={2}><Search size={20} strokeWidth={1.5} /></TopIcon>
          <TopIcon><Bell size={18} fill="#333" strokeWidth={1.2} /></TopIcon>
          <UserCell>Tiana11</UserCell>
        </TopBar>
        <AppBody>
          <Workspace>
            <HeadBlock>
              <LogoCell>
                <IconLogo />
                <Caret $c="#aaa" />
                <LogoRule />
              </LogoCell>
              <ToolRow>
                <ToolGroup><IconSave /><IconUndo /><IconRedo /></ToolGroup>
                <Sep $r={13} />
                <ToolGroup $gap={12}><IconCut /><IconCopy /><IconPaste /><IconBrush /></ToolGroup>
                <Sep />
                <ToolGroup><IconFind /></ToolGroup>
                <Sep $r={10} />
                <ToolGroup><IconPlug /><IconSwap /></ToolGroup>
                <Sep />
              </ToolRow>
              <TabRow>
                <AddTab><IconAddGrid /></AddTab>
                <ActiveTab>
                  <IconBook />
                  WorkBook78
                  <TabClose><IconClose /></TabClose>
                </ActiveTab>
                <TabEnd><IconPaneMenu /></TabEnd>
              </TabRow>
            </HeadBlock>
            <FormatRow>
              <FontBox $w={180}>
                <FontValue>宋体</FontValue>
                <DropButton><ChevronDown size={15} /></DropButton>
              </FontBox>
              <FontBox $w={68} $ml={5}>
                <FontValue $mono $pad={4}>9.0</FontValue>
                <DropButton><ChevronDown size={15} /></DropButton>
              </FontBox>
              <FmtGroup $ml={7} $gap={9}>
                <FmtCell><FmtLetter>B</FmtLetter></FmtCell>
                <FmtCell><FmtLetter $i>I</FmtLetter></FmtCell>
                <FmtCell><FmtLetter $u>U</FmtLetter></FmtCell>
              </FmtGroup>
              <Sep $l={7} $r={6} />
              <FmtGroup $gap={3.5}>
                <FmtCell><IconAlign a="l" /></FmtCell>
                <FmtCell><IconAlign a="c" /></FmtCell>
                <FmtCell><IconAlign a="r" /></FmtCell>
              </FmtGroup>
              <Sep $l={8} $r={7} />
              <FmtGroup $gap={10}>
                <WithCaret><FmtCell><IconBorder /></FmtCell><Caret /></WithCaret>
                <WithCaret><FmtCell><IconFill /></FmtCell><Caret /></WithCaret>
                <WithCaret><ColorA>A</ColorA><Caret /></WithCaret>
              </FmtGroup>
              <FmtGroup $ml={19} $gap={9}>
                <FmtCell><IconFrameA /></FmtCell>
                <FmtCell><IconTable /></FmtCell>
              </FmtGroup>
              <Sep $l={8} $r={8} />
              <FmtGroup $gap={8.4}>
                <FmtCell><IconField /></FmtCell>
                <FmtCell><FmtLetter $s={14}>ab</FmtLetter></FmtCell>
                <FmtCell><IconLines /></FmtCell>
                <FmtCell><FxText>F<small>(x)</small></FxText></FmtCell>
                <FmtCell><IconBars /></FmtCell>
                <FmtCell><IconPicture /></FmtCell>
                <FmtCell><IconSlash /></FmtCell>
                <FmtCell><IconPanel /></FmtCell>
                <WithCaret $gap={0}><FmtCell><IconFrame /></FmtCell><Caret /></WithCaret>
              </FmtGroup>
              <Sep $l={6} $r={0} />
            </FormatRow>
            <RulerArea>
              <RulerRow>
                <RulerCorner />
                {[0, 100, 200, 300, 400, 500, 600, 700].map(n => <RulerMark key={n}>{n}</RulerMark>)}
              </RulerRow>
              <CanvasRow>
                <VRuler><VZero>0</VZero></VRuler>
                <CanvasMain><IconEye /><IconPencil /></CanvasMain>
              </CanvasRow>
            </RulerArea>
            <GapBand />
            <SheetWrap>
              <SheetGrid>
                <Corner><IconDrag /></Corner>
                {COLS.map((c, i) => <ColHead key={i} $on={i === 0}>{c}</ColHead>)}
                {ROWS.map(r => (
                  <React.Fragment key={r}>
                    <RowHead $on={r === 1}>{r}</RowHead>
                    {COLS.map((c, i) => (
                      <Cell key={i} $last={i === 7}>{r === 1 && i === 0 ? <Selection /> : null}</Cell>
                    ))}
                  </React.Fragment>
                ))}
              </SheetGrid>
              <ScrollTrack><ScrollUp><ChevronUp size={17} /></ScrollUp></ScrollTrack>
            </SheetWrap>
          </Workspace>
          <Rail>
            <RailToggle><IconRailToggle /></RailToggle>
            <RailItem $on><IconRailCells /></RailItem>
            <RailItem><IconRailInfo /></RailItem>
            <RailItem><IconRailFrame /></RailItem>
            <RailItem><IconRailBox /></RailItem>
            <RailItem><IconRailStack /></RailItem>
            <RailItem><Link2 size={23} color="#555" strokeWidth={2.4} style={{ transform: "rotate(45deg)" }} /></RailItem>
          </Rail>
          <SidePanel>
            <SideHead>单元格元素<IconCheckArrow /></SideHead>
            <SideForm>
              <FormRow><FormLabel>单元格</FormLabel><TextField>A1</TextField></FormRow>
              <FormRow>
                <FormLabel>插入元素</FormLabel>
                <SelectField>
                  <SelectValue>插入普通文本<SelectTail>(T)</SelectTail></SelectValue>
                  <DropButton $w={24}><ChevronDown size={15} /></DropButton>
                </SelectField>
              </FormRow>
              <FormRow><TextField $h={31} /></FormRow>
            </SideForm>
          </SidePanel>
        </AppBody>
      </AppWindow>

      <Dashboard>
        <GreyStrip />
        <WhiteStrip />
        <DarkPanel>
          <WaveArt width="290" height="110" viewBox="0 0 290 110">
            <rect width="290" height="110" fill="#0c1767" />
            <path d="M0 0H290L90 95C60 108 25 108 0 106Z" fill="#21057a" />
            <path d="M0 0H88L0 43Z" fill="#0f0d6b" />
          </WaveArt>
          <Notice><InfoDot>i</InfoDot>所有单位均为万元</Notice>
          <KpiRow>
            <GoldClip $w={35}><GoldText $s={60} $x={1.3}>3</GoldText></GoldClip>
            <Pie width="48" height="48" viewBox="0 0 48 48">
              <defs>
                <linearGradient id="slice" x1="0" y1="1" x2="1" y2="0">
                  <stop offset="0" stopColor="#ff8a6a" /><stop offset="1" stopColor="#ffd9a0" />
                </linearGradient>
              </defs>
              <circle cx="24" cy="24" r="24" fill="#0219c0" />
              <path d="M24 24V0A24 24 0 0 1 45 12Z" fill="url(#slice)" />
            </Pie>
          </KpiRow>
          <YoY>同比</YoY>
          <GoldRow><GoldClip $w={52}><GoldText $s={30} $x={1.4}>58</GoldText></GoldClip></GoldRow>
          <GreenPill>3,046.32</GreenPill>
          <PercentRow><PercentClip><PercentValue>7.95</PercentValue></PercentClip><PercentSign>%</PercentSign></PercentRow>
          <BandSoft />
          <BandSolid />
        </DarkPanel>
        <Lens>
          <LensProbe />
          <LensText>颜色正常</LensText>
        </Lens>
      </Dashboard>

      <MarkBox />

      <Dialog>
        <DialogHead>
          选择颜色
          <svg width="22" height="22" viewBox="0 0 22 22"><path d="M1 1L21 21M21 1L1 21" stroke="#a9a9a9" strokeWidth="1.3" /></svg>
        </DialogHead>
        <TabStrip>
          <PickerTab $w={50}>样品</PickerTab>
          <PickerTab $w={61} $on>自定义</PickerTab>
        </TabStrip>
        <CustomPane>
          <ColorField><FieldDot /></ColorField>
          <ThumbGutter><HueThumb /></ThumbGutter>
          <HueBar />
          <HsbColumn>
            <SpinRow><Spin radio on label="H" value="233" /></SpinRow>
            <SpinRow $mt={10}><Spin radio off label="S" value="87" /></SpinRow>
            <SpinRow $mt={10}><Spin radio off label="B" value="40" /></SpinRow>
            <SpinRow $mt={24}><Spin label="R" value="13" /></SpinRow>
            <SpinRow $mt={7}><Spin label="G" value="23" /></SpinRow>
            <SpinRow $mt={7}><Spin label="B" value="103" /></SpinRow>
            <HexRow>
              <HexMark>#</HexMark>
              <HexInput>0d1767</HexInput>
              <PickButton><IconPicker /></PickButton>
            </HexRow>
          </HsbColumn>
        </CustomPane>
        <FieldGroup $h={90} $mt={11} $pt={33} $pl={24}>
          <GroupLegend>最近使用</GroupLegend>
          <SwatchGrid>{RECENT.map((c, i) => <Swatch key={i} $c={c} />)}</SwatchGrid>
        </FieldGroup>
        <FieldGroup $h={103} $mt={18} $pt={19} $pl={173}>
          <GroupLegend>预览</GroupLegend>
          <PreviewRow>
            <BoxGrid>
              {NESTS.map(([a, b, c], i) => (
                <Nest key={i} $c={a}><NestMid $c={b}><NestCore $c={c} /></NestMid></Nest>
              ))}
            </BoxGrid>
            <SampleStack>
              <SampleLine $bg="transparent" $fg={NAVY}><span>示例文本</span><span>示例文本</span></SampleLine>
              <SampleLine $bg={NAVY} $fg="#000"><span>示例文本</span><span>示例文本</span></SampleLine>
              <SampleLine $bg="#fff" $fg={NAVY}><span>示例文本</span><span>示例文本</span></SampleLine>
            </SampleStack>
            <CompareCol><CompareHalf $c="#fff" /><CompareHalf $c={NAVY} /></CompareCol>
          </PreviewRow>
        </FieldGroup>
        <DialogFoot><FootButton>确定</FootButton><FootButton>取消</FootButton></DialogFoot>
      </Dialog>

      <ArrowLayer width="1679" height="922" viewBox="0 0 1679 922">
        <polygon points={arrow(586, 153, 362, 353, 8, 24, 11)} fill="#f63b3f" />
        <polygon points={arrow(370, 363, 720, 613, 7, 24, 10)} fill="#f63b3f" />
        <polygon points={arrow(758, 622, 1434, 605, 7, 20, 9)} fill="#f63b3f" />
      </ArrowLayer>
    </Page>
  );
}
